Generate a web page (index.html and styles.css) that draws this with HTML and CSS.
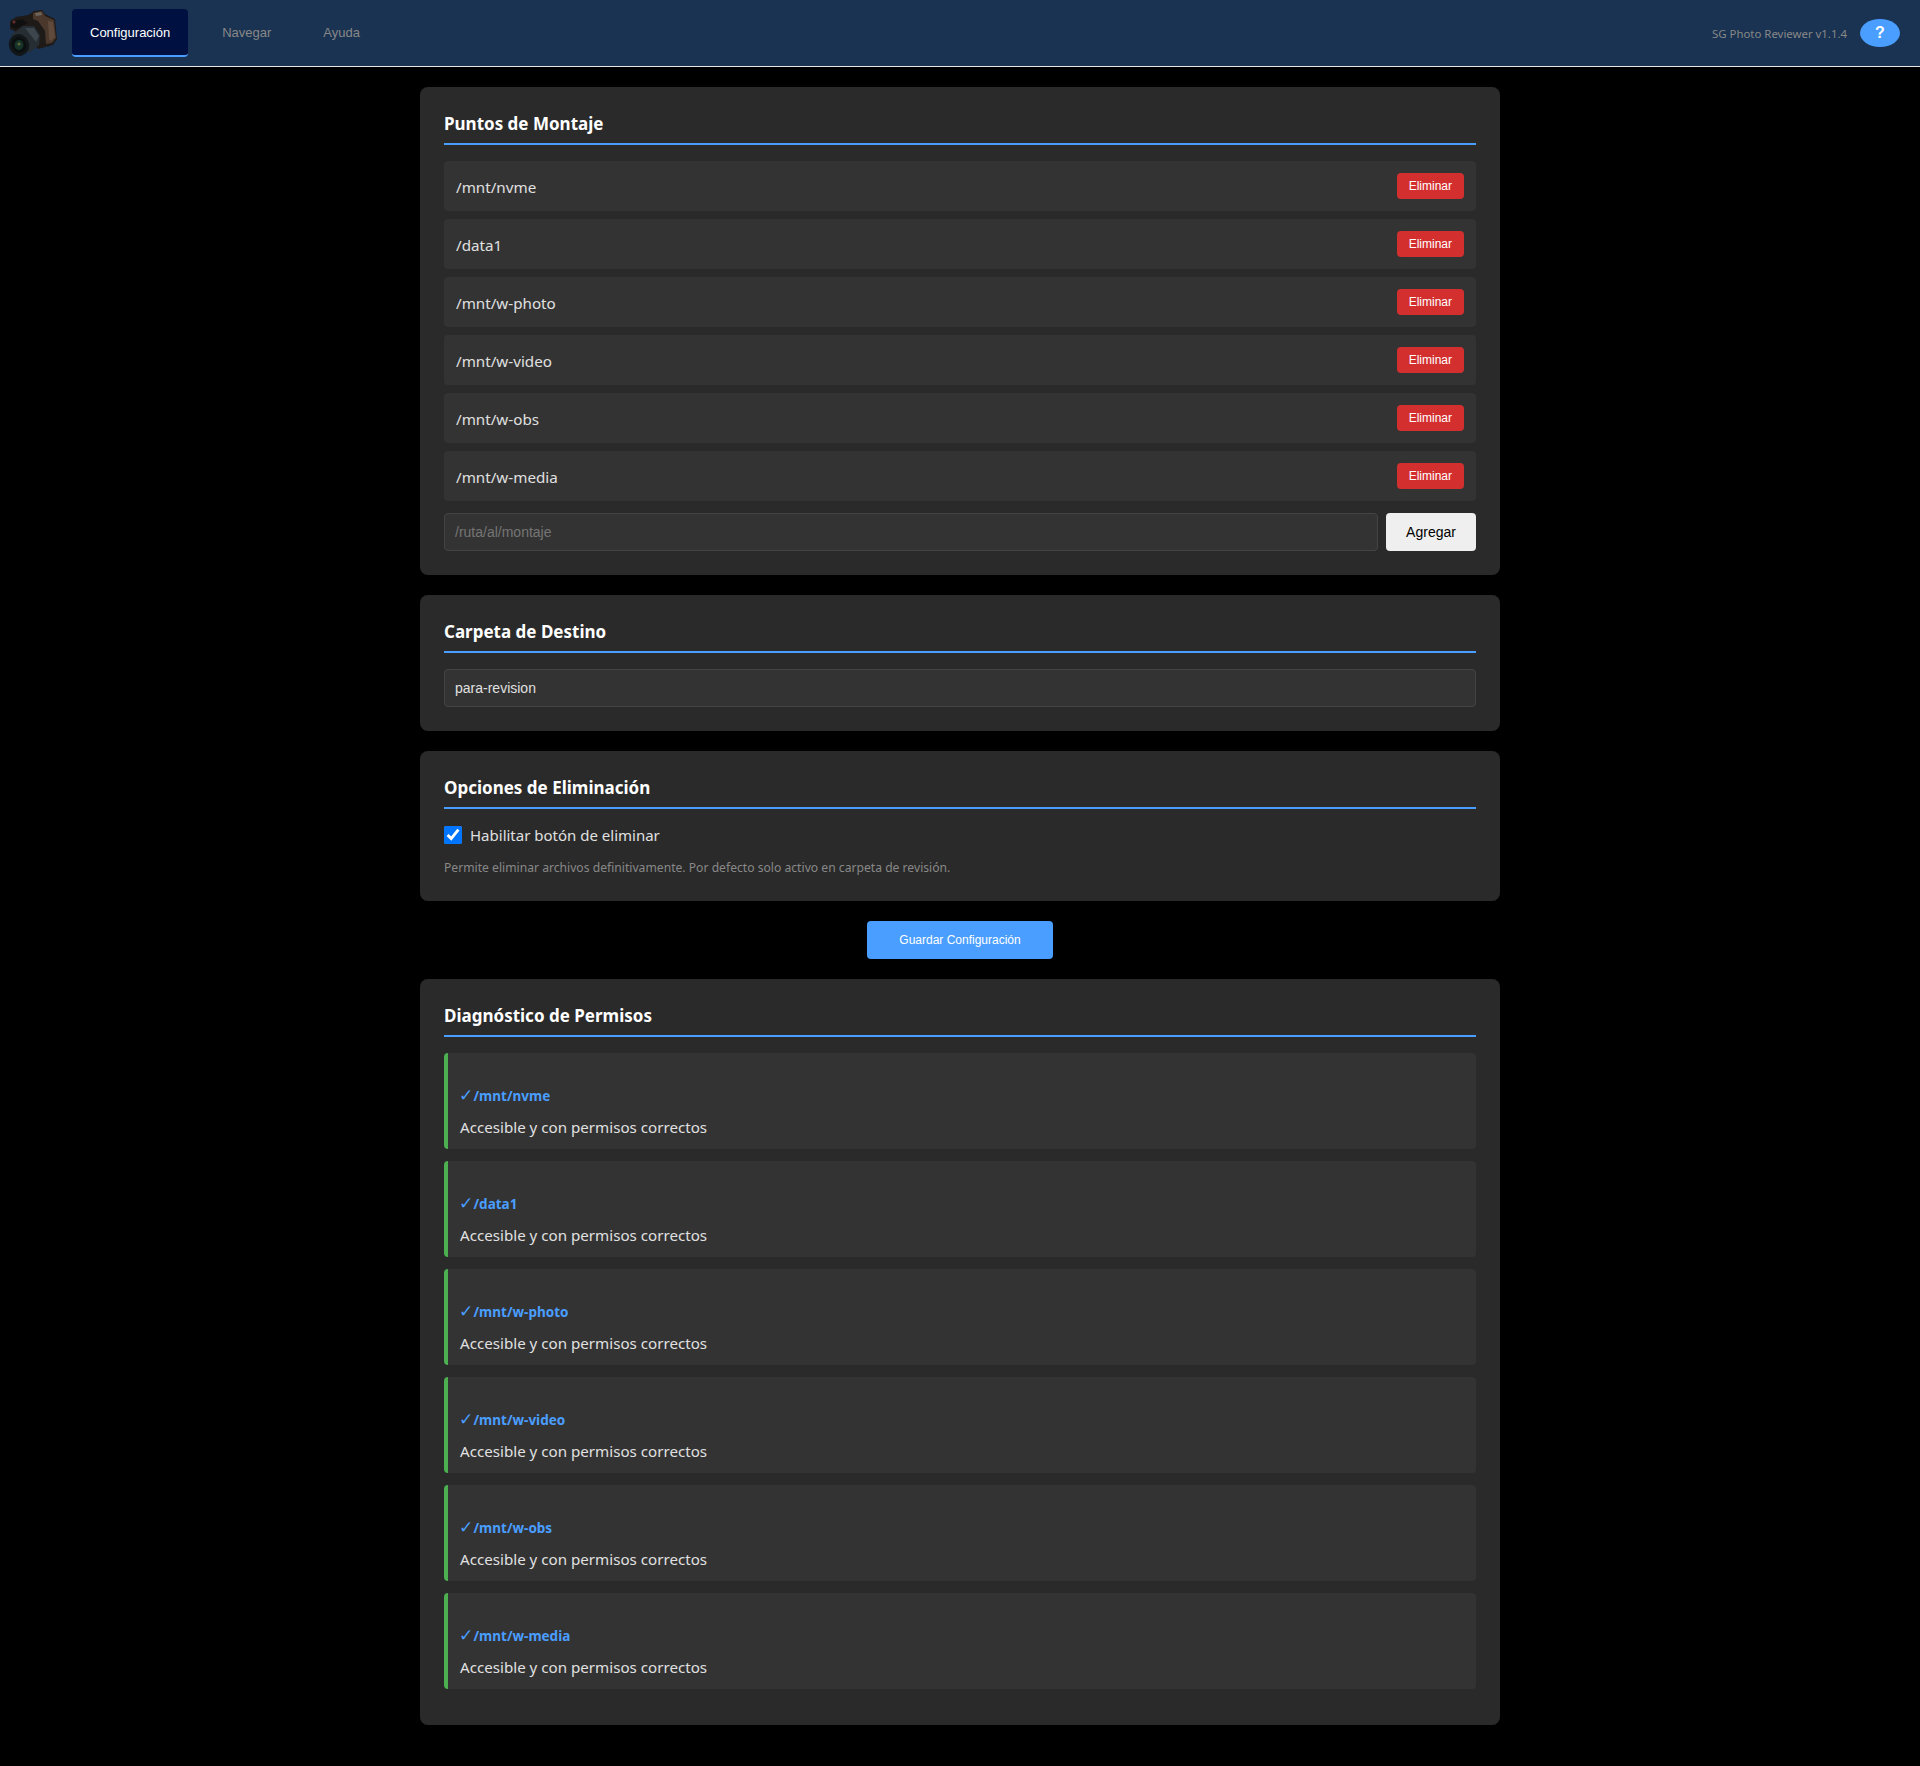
FILE: index.html
```html
<!DOCTYPE html>
<html lang="es">
<head>
    <meta charset="UTF-8">
    <meta name="viewport" content="width=device-width, initial-scale=1.0">
    <title>SG Photo Reviewer</title>
    <link rel="stylesheet" href="styles.css">
</head>
<body>
    <header class="topbar">
        <svg class="logo" viewBox="0 0 50 48" aria-hidden="true">
            <!-- body, viewBox is 50x48 from the top left of the camera -->
            <path d="M2 12 L8 8 L20 6 L26 2 L34 1 L37 5 L47 10 L49 30 L45 36 L30 40 L22 30 L2 20 Z" fill="#1e1a18"/>
            <path d="M25 4 L34 2 L37 7 L46 11 L48 29 L44 34 L38 35 L37 22 L30 12 L25 10 Z" fill="#4a382d"/>
            <path d="M40 12 L45 13 L47 28 L43 32 L41 30 Z" fill="#5f4a3b"/>
            <path d="M27 4 L33 3 L34 6 L28 7 Z" fill="#6f6459"/>
            <path d="M3 13 L14 10 L20 14 L8 20 L3 18 Z" fill="#111010"/>
            <circle cx="6" cy="13" r="1.5" fill="#6a2c2c"/>
            <!-- lens barrel -->
            <path d="M3 26 L15 17 L26 17 L32 26 L31 36 L21 44 Z" fill="#262e33"/>
            <path d="M17 19 L26 19 L31 27 L28 33 Z" fill="#3c464c"/>
            <ellipse cx="11" cy="36" rx="10" ry="11" fill="#12171a" transform="rotate(-20 11 36)"/>
            <ellipse cx="11" cy="36" rx="7" ry="8" fill="#0b0f10" transform="rotate(-20 11 36)"/>
            <ellipse cx="11" cy="36" rx="4.5" ry="5" fill="#16332a"/>
            <circle cx="11" cy="35" r="1.6" fill="#5d6436"/>
        </svg>
        <nav class="tabs">
            <button class="tab active">Configuración</button>
            <button class="tab">Navegar</button>
            <button class="tab">Ayuda</button>
        </nav>
        <div class="topbar-right">
            <span class="version">SG Photo Reviewer v1.1.4</span>
            <button class="help">?</button>
        </div>
    </header>

    <main class="content">
        <section class="card">
            <h2>Puntos de Montaje</h2>
            <div class="mount"><span>/mnt/nvme</span><button class="btn-del">Eliminar</button></div>
            <div class="mount"><span>/data1</span><button class="btn-del">Eliminar</button></div>
            <div class="mount"><span>/mnt/w-photo</span><button class="btn-del">Eliminar</button></div>
            <div class="mount"><span>/mnt/w-video</span><button class="btn-del">Eliminar</button></div>
            <div class="mount"><span>/mnt/w-obs</span><button class="btn-del">Eliminar</button></div>
            <div class="mount"><span>/mnt/w-media</span><button class="btn-del">Eliminar</button></div>
            <div class="add-row">
                <input class="field" type="text" placeholder="/ruta/al/montaje">
                <button class="btn-add">Agregar</button>
            </div>
        </section>

        <section class="card">
            <h2>Carpeta de Destino</h2>
            <input class="field" type="text" value="para-revision">
        </section>

        <section class="card card-options">
            <h2>Opciones de Eliminación</h2>
            <label class="check-row"><input type="checkbox" checked> Habilitar botón de eliminar</label>
            <p class="hint">Permite eliminar archivos definitivamente. Por defecto solo activo en carpeta de revisión.</p>
        </section>

        <div class="save-row"><button class="btn-save">Guardar Configuración</button></div>

        <section class="card">
            <h2>Diagnóstico de Permisos</h2>
            <div class="diag"><h4><span class="tick">✓</span> /mnt/nvme</h4><p>Accesible y con permisos correctos</p></div>
            <div class="diag"><h4><span class="tick">✓</span> /data1</h4><p>Accesible y con permisos correctos</p></div>
            <div class="diag"><h4><span class="tick">✓</span> /mnt/w-photo</h4><p>Accesible y con permisos correctos</p></div>
            <div class="diag"><h4><span class="tick">✓</span> /mnt/w-video</h4><p>Accesible y con permisos correctos</p></div>
            <div class="diag"><h4><span class="tick">✓</span> /mnt/w-obs</h4><p>Accesible y con permisos correctos</p></div>
            <div class="diag"><h4><span class="tick">✓</span> /mnt/w-media</h4><p>Accesible y con permisos correctos</p></div>
        </section>
    </main>
</body>
</html>
```

FILE: styles.css
```css
body {
    margin: 0;
    background-color: #000;
    color: #e0e0e0;
    font-family: "Noto Sans", sans-serif;
}
button {
    font-family: "Liberation Sans", Arial, sans-serif;
    cursor: pointer;
}
.topbar {
    display: flex;
    align-items: center;
    height: 66px;
    padding: 0 20px 0 8px;
    background-color: #1a3352;
    border-bottom: 1px solid #e8e8e8;
}
.logo {
    width: 50px;
    height: 48px;
    margin-right: 14px;
}
.tabs {
    display: flex;
    gap: 16px;
}
.tab {
    padding: 0 18px;
    height: 48px;
    background: none;
    border: none;
    border-bottom: 2px solid transparent;
    border-radius: 4px;
    color: #888;
    font-size: 13px;
}
.tab.active {
    background-color: #001141;
    border-bottom-color: #4a9eff;
    color: #fff;
}
.topbar-right {
    display: flex;
    align-items: center;
    gap: 13px;
    margin-left: auto;
}
.version {
    color: #888;
    font-size: 11.4px;
}
.help {
    width: 40px;
    height: 28px;
    padding: 0;
    background-color: #4a9eff;
    border: none;
    border-radius: 50%;
    color: #fff;
    font-size: 16px;
    font-weight: bold;
}
.content {
    width: 1080px;
    margin: 0 auto;
    padding: 20px 0 36px;
}
.card {
    margin-bottom: 20px;
    padding: 24px;
    background-color: #2a2a2a;
    border-radius: 8px;
}
.card-options {
    padding-bottom: 25px;
}
.card h2 {
    margin: 0 0 16px;
    padding: 1px 0 7px;
    border-bottom: 2px solid #4a9eff;
    color: #fff;
    font-size: 17px;
    line-height: 24px;
}
.mount {
    display: flex;
    justify-content: space-between;
    align-items: center;
    height: 50px;
    margin-bottom: 8px;
    padding: 0 12px;
    background-color: #333;
    border-radius: 4px;
    font-size: 15.2px;
}
.mount span {
    padding-top: 2px;
}
.btn-del {
    height: 26px;
    padding: 0 12px;
    background-color: #d32f2f;
    border: none;
    border-radius: 4px;
    color: #fff;
    font-size: 12px;
}
.add-row {
    display: flex;
    gap: 8px;
    margin-top: 12px;
}
.field {
    box-sizing: border-box;
    width: 100%;
    height: 38px;
    padding: 0 10px;
    background-color: #333;
    border: 1px solid #444;
    border-radius: 4px;
    color: #e0e0e0;
    font-family: "Liberation Sans", Arial, sans-serif;
    font-size: 14px;
}
.field::placeholder {
    color: #757575;
}
.btn-add {
    flex: none;
    width: 90px;
    height: 38px;
    background-color: #efefef;
    border: none;
    border-radius: 4px;
    color: #000;
    font-size: 14px;
}
.check-row {
    display: flex;
    align-items: center;
    gap: 8px;
    margin-top: -1px;
    font-size: 15px;
    line-height: 22px;
}
.check-row input {
    width: 18px;
    height: 18px;
    margin: 0;
    accent-color: #0075ff;
}
.hint {
    margin: 13px 0 0;
    color: #888;
    font-size: 12.15px;
    line-height: 17px;
}
.save-row {
    display: flex;
    justify-content: center;
    margin-bottom: 20px;
}
.btn-save {
    width: 186px;
    height: 38px;
    background-color: #4a9eff;
    border: none;
    border-radius: 4px;
    color: #fff;
    font-size: 12px;
}
.diag {
    box-sizing: border-box;
    height: 96px;
    margin-bottom: 12px;
    padding: 34px 12px 0;
    background-color: #333;
    border-left: 4px solid #4caf50;
    border-radius: 4px;
}
.diag h4 {
    margin: 0 0 11px;
    color: #4a9eff;
    font-size: 13.5px;
    line-height: 18px;
}
.tick {
    display: inline-block;
    width: 11px;
    margin-left: -1px;
    font-family: "DejaVu Sans", sans-serif;
    font-size: 17px;
    font-weight: normal;
    line-height: 1;
}
.diag p {
    margin: 0;
    font-size: 15.15px;
    line-height: 22px;
}
```
